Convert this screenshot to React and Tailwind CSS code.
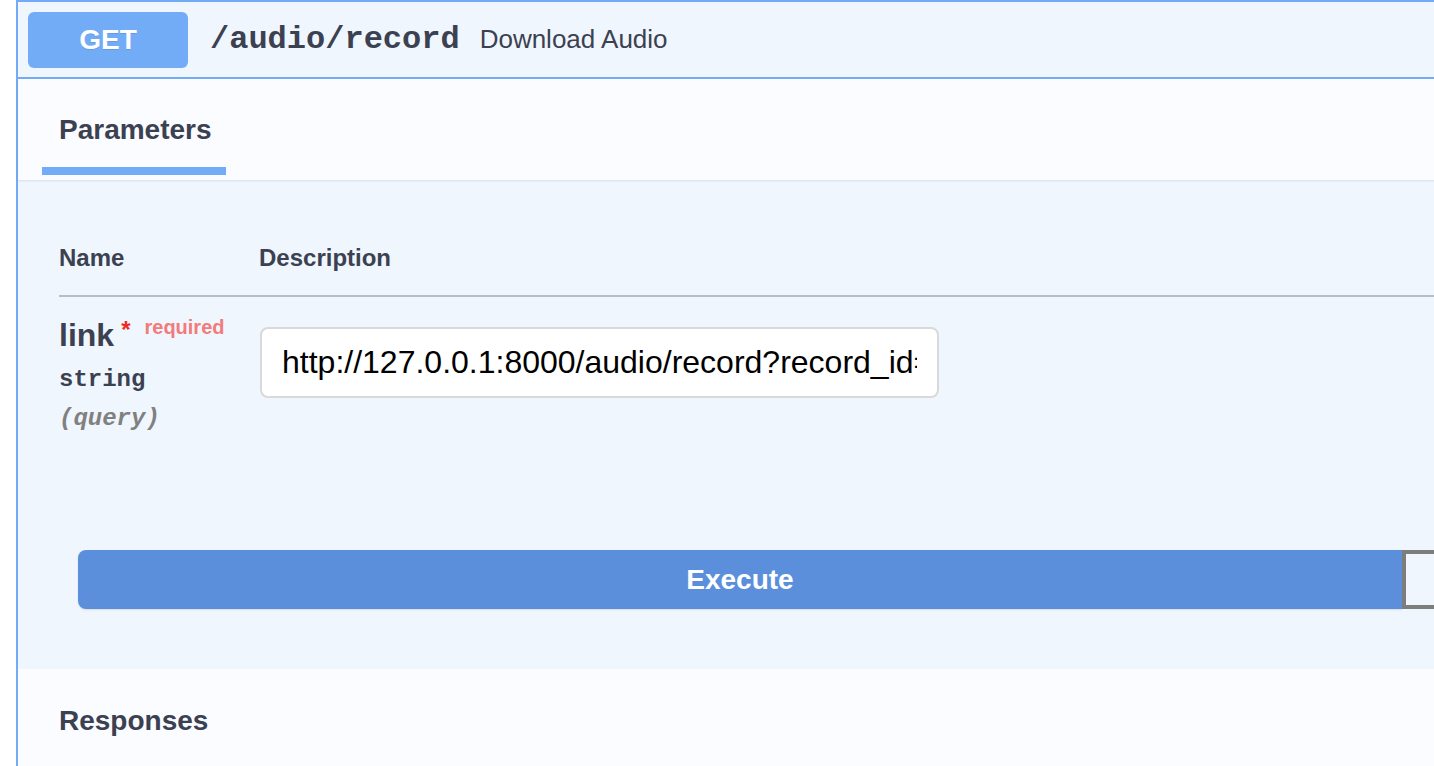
import * as React from "react";

function App() {
  const [link, setLink] = React.useState(
    "http://127.0.0.1:8000/audio/record?record_id=1"
  );

  return (
    <div className="min-h-screen w-full overflow-hidden bg-white pl-4 font-['Liberation_Sans',Arial,sans-serif] text-[#3b4151]">
      <div className="w-[1480px] border-l-2 border-t-2 border-[#73abf7] bg-[#f0f6fe]">
        {/* summary */}
        <div className="flex h-[77px] items-center border-b-2 border-[#73abf7] pl-[10px]">
          <div className="flex h-[56px] w-[160px] items-center justify-center rounded-[6px] bg-[#72abf6] text-[28px] font-bold text-white [text-shadow:0_1px_0_rgba(0,0,0,0.1)]">
            GET
          </div>
          <span className="ml-[22px] font-['Liberation_Mono',monospace] text-[32px] font-bold">
            /audio/record
          </span>
          <span className="ml-[20px] text-[26px]">Download Audio</span>
        </div>

        {/* tabs */}
        <div className="relative z-10 flex h-[101px] bg-[#fafcff] pl-[24px] shadow-[0_1px_2px_rgba(0,0,0,0.1)]">
          <div className="flex w-[184px] flex-col">
            <div className="pl-[17px] pt-[35px] text-[28px] font-bold leading-[32px]">
              Parameters
            </div>
            <div className="mb-[5px] mt-auto h-[8px] bg-[#72abf6]" />
          </div>
        </div>

        {/* parameters */}
        <div className="pb-[60px] pl-[41px] pt-[64px]">
          <div className="flex border-b-2 border-[#b8bdc8] pb-[23px] text-[24px] font-bold leading-[28px]">
            <div className="w-[200px]">Name</div>
            <div>Description</div>
          </div>

          <div className="flex pt-[20px]">
            <div className="w-[201px]">
              <div className="flex items-start">
                <span className="text-[32px] font-bold leading-[36px]">link</span>
                <span className="ml-[7px] mt-[-1px] text-[24px] font-bold leading-[28px] text-[#ee2b1f]">
                  *
                </span>
                <span className="ml-[14px] mt-[-2px] text-[20px] font-bold leading-[24px] text-[#f27b7b]">
                  required
                </span>
              </div>
              <div className="mt-[12px] font-['Liberation_Mono',monospace] text-[24px] font-bold leading-[30px]">
                string
              </div>
              <div className="mt-[9px] font-['Liberation_Mono',monospace] text-[24px] font-bold italic leading-[30px] text-[#808080]">
                (query)
              </div>
            </div>
            <div className="pt-[10px]">
              <input
                value={link}
                onChange={(e) => setLink(e.target.value)}
                className="h-[71px] w-[679px] rounded-[8px] border-2 border-[#d9d9d9] bg-white px-[20px] font-['Liberation_Sans',Arial,sans-serif] text-[32px] text-black outline-none"
              />
            </div>
          </div>

          <div className="ml-[19px] mt-[116px] flex">
            <button className="h-[59px] w-[1324px] shrink-0 rounded-l-[8px] bg-[#5b8fdc] text-[28px] font-bold text-white shadow-[0_1px_2px_rgba(0,0,0,0.1)]">
              Execute
            </button>
            <button
              aria-label="Clear"
              className="h-[59px] w-[1324px] shrink-0 rounded-r-[8px] border-4 border-[#7d7d7d] bg-transparent"
            />
          </div>
        </div>

        {/* responses */}
        <div className="bg-[#fafcff] px-[41px] pb-[60px] pt-[36px]">
          <div className="text-[28px] font-bold leading-[32px]">Responses</div>
        </div>
      </div>
    </div>
  );
}

export default App;
